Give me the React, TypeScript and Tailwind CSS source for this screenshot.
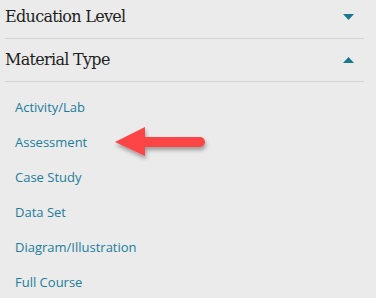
import React from 'react';

const MATERIAL_TYPES = ['Activity/Lab', 'Assessment', 'Case Study', 'Data Set', 'Diagram/Illustration', 'Full Course'];

function Caret({ up }: { up?: boolean }) {
  return (
    <svg width="11" height="6" viewBox="0 0 11 6" className={up ? 'rotate-180' : ''}>
      <path d="M0 0 L11 0 L5.5 6 Z" fill="#1b7891" />
    </svg>
  );
}

function FilterHeading({ title, open }: { title: string; open?: boolean }) {
  return (
    <div className="flex h-[43px] items-center justify-between border-b border-[#d3d3d3] pr-[10px]">
      <span className="text-[16px] text-[#1e1e1e] [font-family:'DejaVu_Serif',serif] tracking-[-0.7px]">{title}</span>
      <Caret up={open} />
    </div>
  );
}

function PointerArrow() {
  return (
    <svg width="100" height="40" viewBox="0 0 100 40" className="absolute left-[110px] top-[122px]">
      <defs>
        <filter id="sh" x="-20%" y="-30%" width="140%" height="170%">
          <feDropShadow dx="1" dy="3" stdDeviation="2" floodColor="#000" floodOpacity="0.35" />
        </filter>
      </defs>
      <g filter="url(#sh)">
        <path d="M5 20 L35 5 L35 15 L90 15 A5 5 0 0 1 90 25 L35 25 L35 34 Z" fill="#fd4444" />
      </g>
    </svg>
  );
}

export default function App() {
  return (
    <div className="relative h-[298px] w-[376px] overflow-hidden bg-[#ebebeb]">
      <div className="-mt-[4px] w-[364px] pl-[5px]">
        <FilterHeading title="Education Level" />
        <FilterHeading title="Material Type" open />
        <ul className="pt-[8px] pl-[10px]">
          {MATERIAL_TYPES.map((t) => (
            <li key={t} className="flex h-[35px] items-center text-[13px] text-[#1c7d9c] [font-family:'Open_Sans',sans-serif]">
              {t}
            </li>
          ))}
        </ul>
      </div>
      <PointerArrow />
    </div>
  );
}
